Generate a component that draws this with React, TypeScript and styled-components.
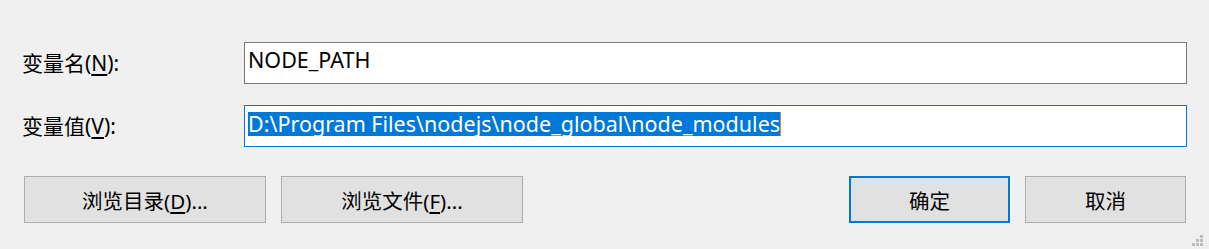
import React from "react";
import styled, { createGlobalStyle } from "styled-components";

const GlobalStyle = createGlobalStyle`
  html, body {
    margin: 0;
    padding: 0;
    background: #f0f0f0;
  }
`;

const UI_FONT = `"Segoe UI", "Noto Sans", "Noto Sans CJK SC", sans-serif`;

function App() {
  return (
    <SDialog>
      <GlobalStyle />
      <SFields>
        <SFieldRow>
          <SLabel>
            变量名(<u>N</u>):
          </SLabel>
          <STextBox>NODE_PATH</STextBox>
        </SFieldRow>
        <SFieldRow>
          <SLabel>
            变量值(<u>V</u>):
          </SLabel>
          <STextBox $focused>
            <SSelected>D:\Program Files\nodejs\node_global\node_modules</SSelected>
            <SCaret />
          </STextBox>
        </SFieldRow>
      </SFields>

      <SButtonRow>
        <SButtonGroup>
          <SButton $wide>
            浏览目录(<u>D</u>)...
          </SButton>
          <SButton $wide>
            浏览文件(<u>F</u>)...
          </SButton>
        </SButtonGroup>
        <SButtonGroup>
          <SButton $default>确定</SButton>
          <SButton>取消</SButton>
        </SButtonGroup>
      </SButtonRow>

      <SGrip width="12" height="12" viewBox="0 0 12 12">
        <rect x="8" y="0" width="3" height="3" fill="#bcbcbc" />
        <rect x="4" y="4" width="3" height="3" fill="#bcbcbc" />
        <rect x="8" y="4" width="3" height="3" fill="#bcbcbc" />
        <rect x="0" y="8" width="3" height="3" fill="#bcbcbc" />
        <rect x="4" y="8" width="3" height="3" fill="#bcbcbc" />
        <rect x="8" y="8" width="3" height="3" fill="#bcbcbc" />
      </SGrip>
    </SDialog>
  );
}

const SDialog = styled.div`
  position: relative;
  box-sizing: border-box;
  width: 1209px;
  height: 249px;
  padding: 42px 22px 0 22px;
  background: #f0f0f0;
  font-family: ${UI_FONT};
  font-size: 20px;
  color: #000;
`;

const SFields = styled.div`
  display: flex;
  flex-direction: column;
  gap: 21px;
`;

const SFieldRow = styled.div`
  display: grid;
  grid-template-columns: 222px 1fr;
  align-items: center;
`;

const SLabel = styled.label`
  white-space: nowrap;
  font-size: 21px;
  line-height: 24px;

  u {
    text-underline-offset: 3px;
  }
`;

const STextBox = styled.div<{ $focused?: boolean }>`
  box-sizing: border-box;
  height: 42px;
  padding: 5px 3px;
  display: flex;
  align-items: flex-start;
  background: #fff;
  border: 1px solid ${(p) => (p.$focused ? "#0078d7" : "#7a7a7a")};
  font-size: 21.5px;
  line-height: 24px;
  white-space: nowrap;
  overflow: hidden;
`;

const SSelected = styled.span`
  margin-top: 1px;
  background: #0078d7;
  color: #fff;
`;

const SCaret = styled.span`
  margin-top: 1px;
  width: 1px;
  height: 24px;
  background: #e8872a;
`;

const SButtonRow = styled.div`
  display: flex;
  justify-content: space-between;
  margin: 29px 1px 0 2px;
`;

const SButtonGroup = styled.div`
  display: flex;
  gap: 15px;
`;

const SButton = styled.button<{ $wide?: boolean; $default?: boolean }>`
  box-sizing: border-box;
  width: ${(p) => (p.$wide ? "242px" : "161px")};
  height: 47px;
  padding: 0;
  background: #e1e1e1;
  border: ${(p) => (p.$default ? "2px solid #0078d7" : "1px solid #adadad")};
  border-radius: 0;
  font-family: ${UI_FONT};
  font-size: 20.5px;
  color: #000;

  u {
    text-underline-offset: 3px;
  }
`;

const SGrip = styled.svg`
  position: absolute;
  right: 5px;
  bottom: 2px;
`;

export default App;
